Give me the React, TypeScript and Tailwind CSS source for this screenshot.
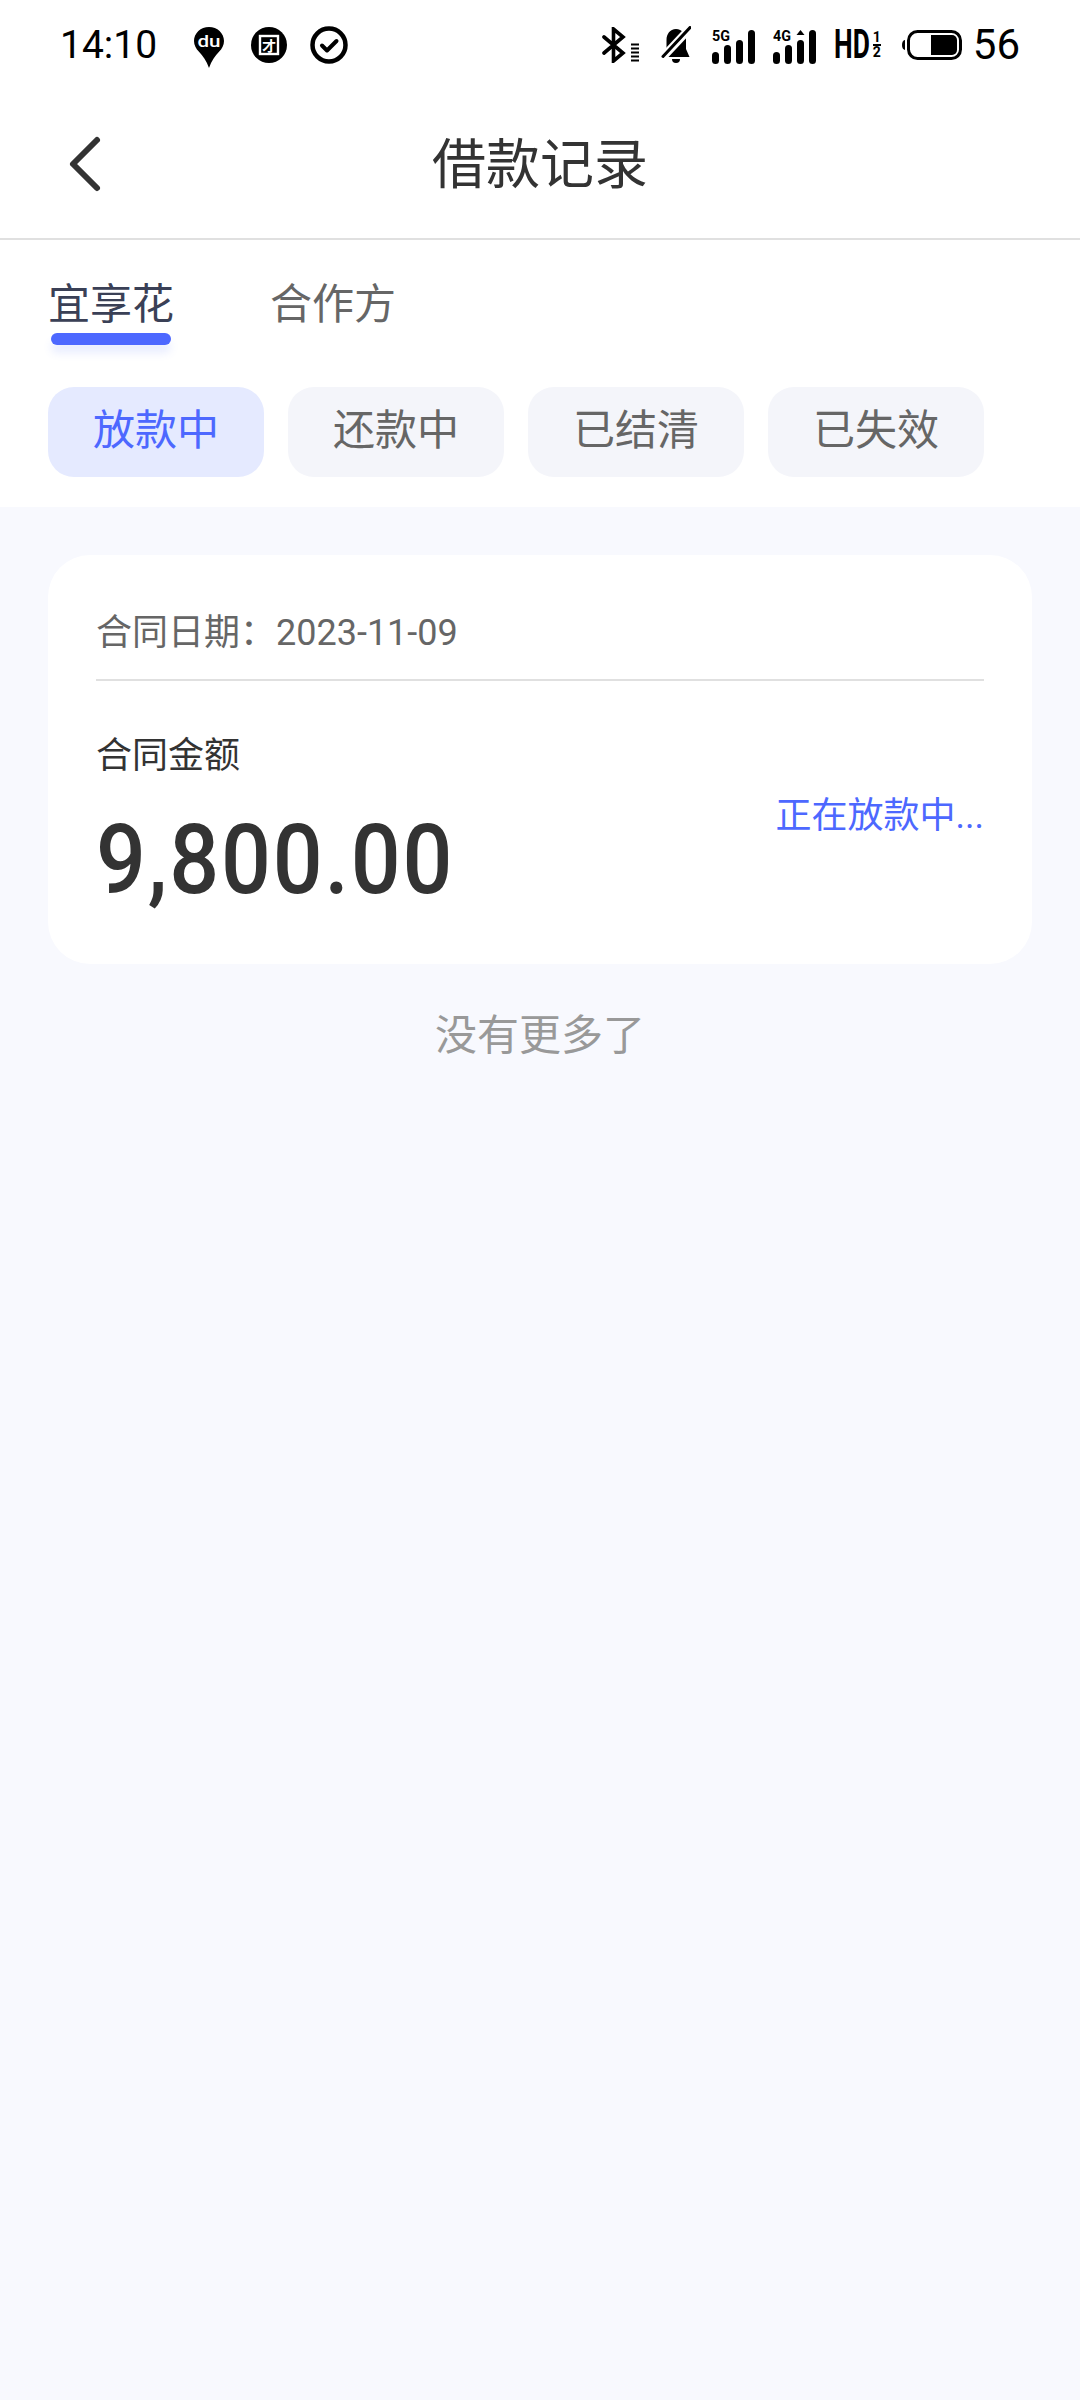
const cjk = "font-['Roboto','Noto_Sans_CJK_SC',sans-serif]";

function DuPin() {
  return (
    <svg width="30" height="41" viewBox="0 0 30 41">
      <path d="M15 0C6.7 0 0 6.2 0 14c0 4.4 2 7.6 5 10.800 3.800 4 7.600 9 10 16.200 2.400-7.200 6.200-12.200 10-16.200 3-3.200 5-6.400 5-10.800C30 6.200 23.300 0 15 0Z" fill="#000" />
      <text x="15" y="20" textAnchor="middle" fontFamily="Roboto" fontSize="17" fontWeight="500" fill="#fff" textLength="23" lengthAdjust="spacingAndGlyphs">du</text>
    </svg>
  );
}

function TuanBadge() {
  return (
    <svg width="36" height="36" viewBox="0 0 36 36">
      <circle cx="18" cy="18" r="18" fill="#000" />
      <rect x="9" y="9" width="18" height="18" fill="none" stroke="#fff" strokeWidth="2.400" />
      <text x="18" y="24" textAnchor="middle" fontFamily="Noto Sans CJK SC" fontSize="14" fontWeight="700" fill="#fff">才</text>
    </svg>
  );
}

function CheckBadge() {
  return (
    <svg width="38" height="38" viewBox="0 0 38 38">
      <circle cx="19" cy="19" r="16.500" fill="none" stroke="#000" strokeWidth="4.500" />
      <path d="M12 19.500l5 5 9.500-9.500" fill="none" stroke="#000" strokeWidth="4" strokeLinecap="round" strokeLinejoin="round" />
    </svg>
  );
}

function Bluetooth() {
  return (
    <svg width="37" height="36" viewBox="0 0 37 36">
      <path d="M2 10l19 16-9.500 8V2L21 10 2 26" fill="none" stroke="#000" strokeWidth="3.600" strokeLinecap="round" />
      <path d="M29 17.500h8M29 21.500h8M29 25.500h8M29 29.500h8M29 33.500h8" stroke="#000" strokeWidth="2" />
    </svg>
  );
}

function BellOff() {
  return (
    <svg width="30" height="38" viewBox="0 0 30 38">
      <path d="M15 3C9 3 5.500 8 5.500 14v9L1.500 31h27l-3.500-8v-9C25 8 21 3 15 3Z" fill="#000" />
      <path d="M11 33h8a4 4 0 0 1-8 0Z" fill="#000" />
      <path d="M32 -1 2 31" stroke="#fff" strokeWidth="8" />
      <path d="M29 1.500 2 30.500" stroke="#000" strokeWidth="3" strokeLinecap="round" />
    </svg>
  );
}

function Signal({ label, arrow }: { label: string; arrow?: boolean }) {
  return (
    <svg width="43" height="37" viewBox="0 0 43 37">
      <text x="0" y="14" fontFamily="Roboto" fontSize="15" fontWeight="700" fill="#000" textLength="18" lengthAdjust="spacingAndGlyphs">{label}</text>
      <rect x="0" y="25" width="7" height="12" rx="3.500" fill="#000" />
      <rect x="12" y="18" width="7" height="19" rx="3.500" fill="#000" />
      <rect x="24" y="13" width="7" height="24" rx="3.500" fill="#000" />
      <rect x="36" y="3" width="7" height="34" rx="3.500" fill="#000" />
      {arrow && <path d="M27.500 3l4 5h-8Z" fill="#000" />}
    </svg>
  );
}

function HdBadge() {
  return (
    <div className="flex h-[30px] w-[47px] items-center font-bold text-black">
      <span className="w-[36px] origin-left scale-x-[0.66] text-[40px] leading-[30px]">HD</span>
      <div className="ml-[3px] flex flex-col items-center">
        <span className="text-[14px] leading-[13px]">1</span>
        <span className="h-[2px] w-[8px] bg-black" />
        <span className="text-[14px] leading-[13px]">2</span>
      </div>
    </div>
  );
}

function Battery() {
  return (
    <svg width="60" height="30" viewBox="0 0 60 30">
      <path d="M3 10v10a3 5 0 0 1 0-10Z" fill="#000" />
      <rect x="6.500" y="1.500" width="52" height="27" rx="9" fill="none" stroke="#000" strokeWidth="3" />
      <path d="M29 5h21a5 5 0 0 1 5 5v10a5 5 0 0 1-5 5H29Z" fill="#000" />
    </svg>
  );
}

function BackArrow() {
  return (
    <svg width="36" height="60" viewBox="0 0 36 60">
      <path d="M30 6 6 30l24 24" fill="none" stroke="#333" strokeWidth="6" strokeLinecap="round" strokeLinejoin="round" />
    </svg>
  );
}

export default function App() {
  const chips = ["放款中", "还款中", "已结清", "已失效"];

  return (
    <div className={`flex min-h-[2400px] w-[1080px] flex-col bg-[#f8f9fe] ${cjk}`}>
      <div className="flex h-[90px] items-center justify-between bg-white pl-[60px] pr-[60px] text-[39px] leading-none text-black">
        <div className="flex items-center">
          <span>14:10</span>
          <span className="ml-[37px] mt-[4px]"><DuPin /></span>
          <span className="ml-[27px]"><TuanBadge /></span>
          <span className="ml-[23px]"><CheckBadge /></span>
        </div>
        <div className="flex items-center">
          <Bluetooth />
          <span className="ml-[22px]"><BellOff /></span>
          <span className="ml-[21px]"><Signal label="5G" /></span>
          <span className="ml-[18px]"><Signal label="4G" arrow /></span>
          <span className="ml-[18px]"><HdBadge /></span>
          <span className="ml-[21px]"><Battery /></span>
          <span className="ml-[11px] text-[42px]">56</span>
        </div>
      </div>

      <div className="grid h-[150px] grid-cols-[1fr_auto_1fr] items-center border-b-2 border-[#e0e0e0] bg-white">
        <button type="button" className="ml-[67px] w-fit">
          <BackArrow />
        </button>
        <h1 className="mt-[3px] text-[54px] font-normal leading-none text-[#333]">借款记录</h1>
        <div />
      </div>

      <div className="bg-white pb-[30px] pl-[48px] pt-[35px]">
        <div className="flex gap-[96px] text-[42px] leading-[60px]">
          <div className="flex flex-col items-center">
            <span className="text-[#3a4056]">宜享花</span>
            <span className="-mt-[2px] h-[12px] w-[120px] rounded-full bg-[#4d68ff] shadow-[0_8px_8px_rgba(77,104,255,0.12)]" />
          </div>
          <span className="text-[#666]">合作方</span>
        </div>
        <div className="mt-[42px] flex gap-[24px]">
          {chips.map((chip, i) => (
            <div
              key={chip}
              className={
                i === 0
                  ? "flex h-[90px] w-[216px] items-center justify-center rounded-[26px] bg-[#e5eaff] pb-[3px] text-[42px] text-[#4d68ff]"
                  : "flex h-[90px] w-[216px] items-center justify-center rounded-[26px] bg-[#f4f5fa] pb-[3px] text-[42px] text-[#666]"
              }
            >
              {chip}
            </div>
          ))}
        </div>
      </div>

      <div className="px-[48px] pt-[48px]">
        <div className="h-[409px] rounded-[42px] bg-white px-[48px]">
          <div className="border-b-2 border-[#e0e0e0] pb-[21px] pt-[53px] text-[36px] leading-[50px] text-[#666]">
            合同日期：2023-11-09
          </div>
          <div className="mt-[50px] flex items-start justify-between">
            <div>
              <div className="text-[36px] leading-[50px] text-[#333]">合同金额</div>
              <div className="mt-[24px] origin-left scale-x-[0.915] text-[96px] font-medium leading-[110px] tracking-[2px] text-[#333]">9,800.00</div>
            </div>
            <div className="mt-[60px] text-[36px] leading-[50px] text-[#4d68ff]">正在放款中...</div>
          </div>
        </div>
      </div>

      <div className="mt-[42px] text-center text-[42px] leading-[60px] text-[#999]">没有更多了</div>
    </div>
  );
}
